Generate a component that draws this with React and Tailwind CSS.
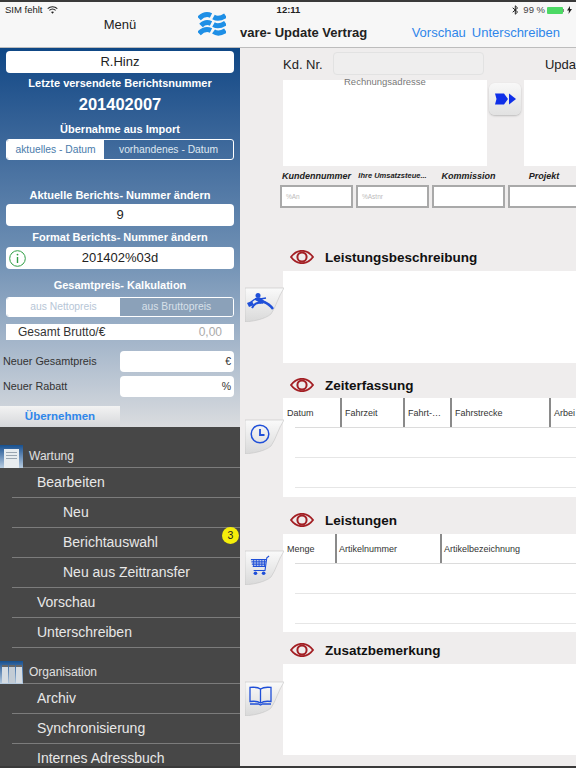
import React from "react";

const blue = "#1f4fd8";

const EyeIcon = () => (
  <svg width="24" height="14" viewBox="0 0 24 14" className="shrink-0">
    <path d="M1 7C5 1.5 9 .8 12 .8S19 1.5 23 7C19 12.5 15 13.2 12 13.2S5 12.5 1 7Z" fill="none" stroke="#a31f24" strokeWidth="1.8" />
    <circle cx="12" cy="7" r="4.6" fill="none" stroke="#a31f24" strokeWidth="2" />
  </svg>
);

const RunnerIcon = () => (
  <svg width="27" height="18" viewBox="0 0 27 18" fill="none" stroke={blue}>
    <circle cx="11" cy="2.5" r="2.5" fill={blue} stroke="none" />
    <path d="M8 5 13 4.5 19 9 15 11 8 7Z" fill={blue} stroke="none" />
    <path d="M13 6 19 5" strokeWidth="1.5" />
    <path d="M17 9C20 10 23 12 26 16" strokeWidth="2.4" />
    <path d="M14 10C10 9 7 11 5 15" strokeWidth="2" />
    <path d="M8 6 4 9" strokeWidth="1.5" />
    <path d="M0 10 5 8 7 12 2 14Z" fill={blue} stroke="none" />
  </svg>
);

const ClockIcon = () => (
  <svg width="20" height="20" viewBox="0 0 20 20" fill="none" stroke={blue} strokeWidth="1.5">
    <circle cx="10" cy="10" r="8.8" />
    <path d="M10 5V11H14.5" strokeWidth="1.8" />
  </svg>
);

const CartIcon = () => (
  <svg width="20" height="21" viewBox="0 0 22 23" fill="none" stroke={blue}>
    <path d="M21 1 18.5 3 16.5 17H4" strokeWidth="1.2" />
    <path d="M1 5H18M1.5 7.5H17.5M2 10H17M3 12.5H17" strokeWidth="1.2" />
    <path d="M4 5V13M7 5V13M10 5V13M13 5V13M16 5V13" strokeWidth="1" />
    <circle cx="6" cy="20" r="2" fill={blue} stroke="none" />
    <circle cx="15" cy="20" r="2" fill={blue} stroke="none" />
  </svg>
);

const BookIcon = () => (
  <svg width="23" height="20" viewBox="0 0 23 20" fill="none" stroke={blue} strokeWidth="1.3">
    <path d="M11.5 3C9 1.2 5 1 1 1.4V15.5C5 15 9 15.3 11.5 17C14 15.3 18 15 22 15.5V1.4C18 1 14 1.2 11.5 3Z" />
    <path d="M11.5 3V17M1 18H9.5L11.5 19 13.5 18H22" />
  </svg>
);

const Logo = () => (
  <svg width="28" height="27" viewBox="0 0 28 27" fill="none" stroke="#1e8fe6" strokeWidth="5">
    <path d="M1 7.5C5 3.5 9 2.5 13 4.5" />
    <path d="M15.5 6C19 8 23 7.5 27.5 4.5" />
    <path d="M3 14.5C6 11.5 9 10.5 13 12.5" />
    <path d="M15.5 13.5C19 15.5 23 15 27.5 12" />
    <path d="M1 22.5C5 18.5 9 17.5 13 19.5" />
    <path d="M15.5 20.5C19 23 23 22.5 27.5 19.5" />
  </svg>
);

const Tag = ({ top, children }) => (
  <div className="absolute left-[-38px] w-[39px] h-[35px]" style={{ top }}>
    <svg width="39" height="35" viewBox="0 0 39 35" className="absolute inset-0">
      <defs>
        <linearGradient id="tagFill" x1="0" y1="0" x2="0" y2="1">
          <stop offset="0" stopColor="#fafafa" />
          <stop offset="1" stopColor="#d9d9d9" />
        </linearGradient>
      </defs>
      <path d="M0 1H39C33 10 31 20 26 27 20 32 10 34 0 35Z" fill="url(#tagFill)" stroke="#c4c4c4" strokeWidth=".6" />
    </svg>
    <div className="absolute left-0 top-0 w-[30px] h-[30px] flex items-center justify-center">{children}</div>
  </div>
);

const Field = ({ children, className = "" }) => (
  <div className={`mx-[6px] h-[22px] bg-white rounded-[4px] flex items-center justify-center text-[13px] text-[#222] ${className}`}>
    {children}
  </div>
);

const Label = ({ children, className = "" }) => (
  <div className={`h-[16px] leading-[16px] text-center text-[11px] font-bold text-white ${className}`}>{children}</div>
);

const MenuRow = ({ children, sub, badge }) => (
  <div className="relative ml-[12px] h-[30px] border-b border-[#7c7c7c] flex items-center">
    <span className={`text-[14px] text-[#e8e8e8] ${sub ? "pl-[51px]" : "pl-[25px]"}`}>{children}</span>
    {badge && (
      <span className="absolute right-[1px] top-[-1px] w-[17px] h-[17px] rounded-full bg-[#f5ee0a] text-[#222] text-[10.5px] flex items-center justify-center">
        {badge}
      </span>
    )}
  </div>
);

const MenuHead = ({ kind, children }) => (
  <div className="h-[23px] border-b border-[#7c7c7c] flex items-center">
    <div className="w-[23px] h-[23px] bg-gradient-to-b from-[#15508f] to-[#b9cde0] flex items-end justify-center shrink-0">
      {kind === "doc" ? (
        <div className="w-[15px] h-[19px] bg-[#e8ecef] flex flex-col gap-[2px] px-[2px] pt-[3px]">
          <div className="h-[1px] bg-[#9aa5b0]" />
          <div className="h-[1px] bg-[#9aa5b0]" />
          <div className="h-[1px] bg-[#9aa5b0]" />
        </div>
      ) : (
        <div className="flex gap-[1px] pb-[1px]">
          <div className="w-[6px] h-[18px] bg-[#d5dce3] border-t-2 border-[#666]" />
          <div className="w-[6px] h-[18px] bg-[#c3ccd5] border-t-2 border-[#666]" />
          <div className="w-[6px] h-[18px] bg-[#d5dce3] border-t-2 border-[#666]" />
        </div>
      )}
    </div>
    <span className="ml-[6px] text-[12px] text-[#e0e0e0]">{children}</span>
  </div>
);

const Heading = ({ children, className = "" }) => (
  <div className={`flex items-center gap-[11px] pl-[7px] h-[16px] ${className}`}>
    <EyeIcon />
    <span className="pt-[2px] text-[13.5px] font-bold text-[#111]">{children}</span>
  </div>
);

const ColHead = ({ width, pad = "pl-[3px]", children }) => (
  <div className={`h-[30px] flex items-center pt-[1px] border-r-2 border-[#8a8a8a] text-[9px] text-[#333] shrink-0 ${pad}`} style={{ width }}>
    {children}
  </div>
);

const Lines = () => (
  <div className="absolute left-[12px] right-0 top-[29px]">
    <div className="h-[30px] border-t border-[#dcdcdc]" />
    <div className="h-[30px] border-t border-[#e6e6e6]" />
    <div className="border-t border-[#e6e6e6]" />
  </div>
);

const InputCol = ({ title, hint, small, last }) => (
  <div className={`flex flex-col items-center shrink-0 ${last ? "w-[80px]" : "w-[73px]"}`}>
    <div className={`h-[18px] pt-[1px] leading-[18px] font-bold italic text-[#222] whitespace-nowrap ${small ? "text-[7.5px]" : "text-[9px]"} ${last ? "pr-[8px]" : ""}`}>
      {title}
    </div>
    <div className="mt-[1px] w-full h-[23px] border-2 border-[#a9a9a9] bg-white text-[6.5px] text-[#bbb] pl-[4px] flex items-center">
      {hint}
    </div>
  </div>
);

export default function App() {
  return (
    <div className="w-[576px] h-[768px] overflow-hidden flex flex-col border-y-2 border-[#3a3a3a] bg-[#efeded]" style={{ fontFamily: '"Liberation Sans", Arial, sans-serif' }}>
      {/* top bars */}
      <header className="relative h-[46px] shrink-0 bg-[#f7f7f7] border-b border-[#bdbdbd] overflow-hidden">
        <div className="h-[16px] pl-[5px] pr-[4px] flex items-center justify-between text-[9.5px] text-[#222]">
          <div className="flex items-center gap-[4px] w-[120px]">
            SIM fehlt
            <svg width="11" height="8" viewBox="0 0 11 8" fill="none" stroke="#222" strokeWidth="1.1">
              <path d="M.7 2.7C3.5 0 7.5 0 10.3 2.7M2.4 4.4C4.2 2.8 6.8 2.8 8.6 4.4" />
              <path d="M5.5 7.8 4 6C5 5.3 6 5.3 7 6Z" fill="#222" stroke="none" />
            </svg>
          </div>
          <span className="font-bold text-[9.5px]">12:11</span>
          <div className="flex items-center justify-end w-[120px]">
            <svg width="7" height="10" viewBox="0 0 7 10" fill="none" stroke="#222" strokeWidth="1">
              <path d="M.7 2.8 5.6 7 3.3 9.2V.8L5.6 3 .7 7.2" />
            </svg>
            <span className="ml-[4px] text-[#444]">99 %</span>
            <div className="ml-[2px] w-[16px] h-[7px] bg-[#4cd964] rounded-[1px]" />
            <div className="w-[1px] h-[3px] bg-[#888]" />
            <svg width="5" height="8" viewBox="0 0 5 8" fill="#222" className="ml-[3px]">
              <path d="M3 0 0 4.5H2L1.5 8 5 3H3Z" />
            </svg>
          </div>
        </div>
        <div className="flex items-start h-[28px]">
          <div className="w-[240px] shrink-0 text-center text-[13px] text-[#222] leading-[14px]">Menü</div>
          <div className="flex-1 flex items-center justify-between h-[24px] mt-[3px] pr-[16px] whitespace-nowrap">
            <span className="text-[13px] font-bold text-[#222]">vare- Update Vertrag</span>
            <div className="flex gap-[6px] text-[13px] text-[#2f86ea]">
              <span>Vorschau</span>
              <span>Unterschreiben</span>
            </div>
          </div>
        </div>
        <div className="absolute left-[198px] top-[9px]"><Logo /></div>
      </header>

      <div className="flex flex-1 min-h-0">
        {/* left column */}
        <aside className="w-[240px] shrink-0 flex flex-col">
          <div className="h-[379px] shrink-0 bg-gradient-to-b from-[#0e4785] via-[#6f90b4] via-55% to-[#dadcdf] flex flex-col">
            <Field className="mt-[3px] shrink-0">R.Hinz</Field>
            <Label className="mt-[2px]">Letzte versendete Berichtsnummer</Label>
            <div className="mt-[3px] h-[20px] leading-[20px] text-center text-[16.5px] font-bold text-white">201402007</div>
            <Label className="mt-[7px]">Übernahme aus Import</Label>
            <div className="mt-[2px] mx-[6px] h-[21px] flex rounded-[3px] border border-white overflow-hidden text-[10.3px]">
              <div className="w-[97px] bg-white text-[#4a7bab] flex items-center justify-center">aktuelles - Datum</div>
              <div className="flex-1 text-[#dfe8f1] flex items-center justify-center">vorhandenes - Datum</div>
            </div>
            <Label className="mt-[27px]">Aktuelle Berichts- Nummer ändern</Label>
            <Field className="mt-[1px] shrink-0">9</Field>
            <Label className="mt-[3px]">Format Berichts- Nummer ändern</Label>
            <Field className="relative mt-[2px] shrink-0">
              <svg width="17" height="17" viewBox="0 0 17 17" className="absolute left-[3px] top-[3px]" fill="none" stroke="#2f9e44">
                <circle cx="8.5" cy="8.5" r="7.8" />
                <path d="M8.5 7V13" strokeWidth="1.4" />
                <circle cx="8.5" cy="4.6" r=".9" fill="#2f9e44" stroke="none" />
              </svg>
              201402%03d
            </Field>
            <Label className="mt-[8px]">Gesamtpreis- Kalkulation</Label>
            <div className="mt-[4px] mx-[6px] h-[21px] flex rounded-[3px] border border-white overflow-hidden text-[10.3px]">
              <div className="w-[113px] bg-white text-[#b7c6d6] flex items-center justify-center">aus Nettopreis</div>
              <div className="flex-1 bg-[#8ba1b9] text-[#d8e0e9] flex items-center justify-center">aus Bruttopreis</div>
            </div>
            <div className="mt-[7px] mx-[6px] h-[16px] shrink-0 bg-white flex items-center justify-between pl-[12px] pr-[12px] text-[12px] text-[#333]">
              <span>Gesamt Brutto/€</span>
              <span className="text-[#aaa]">0,00</span>
            </div>
            <div className="mt-[11px] flex items-center h-[21px] shrink-0">
              <span className="w-[120px] pl-[3px] text-[10.8px] text-[#333]">Neuer Gesamtpreis</span>
              <div className="w-[114px] h-full bg-white rounded-[4px] text-right pr-[3px] text-[10.5px] leading-[21px] text-[#333]">€</div>
            </div>
            <div className="mt-[4px] flex items-center h-[21px] shrink-0">
              <span className="w-[120px] pl-[3px] text-[10.8px] text-[#333]">Neuer Rabatt</span>
              <div className="w-[114px] h-full bg-white rounded-[4px] text-right pr-[3px] text-[10.5px] leading-[21px] text-[#333]">%</div>
            </div>
            <div className="mt-[9px] w-[120px] h-[21px] shrink-0 bg-gradient-to-b from-[#f3f3f3] to-[#d5d7da] text-center text-[11.5px] leading-[21px] font-bold text-[#2f86ea]">
              Übernehmen
            </div>
          </div>

          <nav className="flex-1 min-h-0 overflow-hidden bg-[#474747] pt-[18px]">
            <MenuHead kind="doc">Wartung</MenuHead>
            <MenuRow>Bearbeiten</MenuRow>
            <MenuRow sub>Neu</MenuRow>
            <MenuRow sub badge="3">Berichtauswahl</MenuRow>
            <MenuRow sub>Neu aus Zeittransfer</MenuRow>
            <MenuRow>Vorschau</MenuRow>
            <MenuRow>Unterschreiben</MenuRow>
            <div className="mt-[13px]">
              <MenuHead kind="org">Organisation</MenuHead>
            </div>
            <MenuRow>Archiv</MenuRow>
            <MenuRow>Synchronisierung</MenuRow>
            <MenuRow>Internes Adressbuch</MenuRow>
          </nav>
        </aside>

        {/* form */}
        <main className="flex-1 min-w-0 overflow-hidden pl-[43px] flex flex-col whitespace-nowrap">
          <div className="flex items-center h-[23px] mt-[4px] shrink-0">
            <span className="w-[50px] pt-[2px] text-[13px] text-[#222]">Kd. Nr.</span>
            <div className="w-[151px] h-full rounded-[4px] border border-[#e2e2e2] bg-[#efeeee]" />
            <span className="ml-[61px] pt-[2px] text-[13px] text-[#222]">Upda</span>
          </div>

          <div className="relative flex h-[86px] mt-[5px] shrink-0">
            <div className="w-[204px] bg-white text-[9.5px] text-[#777] pl-[61px] leading-[3px] shrink-0">Rechnungsadresse</div>
            <div className="w-[37px] shrink-0 pl-[2px] pt-[3px]">
              <div className="w-[32px] h-[32px] rounded-[6px] bg-gradient-to-b from-[#f8f8f8] to-[#e2e2e2] shadow-[0_1px_2px_#bbb] flex items-center justify-center">
                <svg width="21" height="12" viewBox="0 0 21 12" fill="#0f2fe8">
                  <path d="M0 .5H9L13 6 9 11.5H0L1.5 6Z" />
                  <path d="M14 .5 21 6 14 11.5Z" />
                </svg>
              </div>
            </div>
            <div className="flex-1 bg-white" />
          </div>

          <div className="flex gap-[3px] -ml-[3px] shrink-0">
            <InputCol title="Kundennummer" hint="%An" />
            <InputCol title="Ihre Umsatzsteue..." hint="%Astnr" small />
            <InputCol title="Kommission" />
            <InputCol title="Projekt" last />
          </div>

          <Heading className="mt-[41px] shrink-0">Leistungsbeschreibung</Heading>
          <div className="relative h-[92px] mt-[6px] bg-white shrink-0">
            <Tag top="16px"><RunnerIcon /></Tag>
          </div>

          <Heading className="mt-[14px] shrink-0">Zeiterfassung</Heading>
          <div className="relative h-[99px] mt-[5px] bg-white shrink-0">
            <div className="flex">
              <ColHead pad="pl-[4px]" width="59px">Datum</ColHead>
              <ColHead width="63px">Fahrzeit</ColHead>
              <ColHead width="47px">Fahrt-…</ColHead>
              <ColHead width="99px">Fahrstrecke</ColHead>
              <div className="h-[30px] flex items-center pt-[1px] pl-[3px] text-[9px] text-[#333]">Arbei</div>
            </div>
            <Lines />
            <Tag top="21px"><ClockIcon /></Tag>
          </div>

          <Heading className="mt-[15px] shrink-0">Leistungen</Heading>
          <div className="relative h-[98px] mt-[6px] bg-white shrink-0">
            <div className="flex">
              <ColHead pad="pl-[4px]" width="54px">Menge</ColHead>
              <ColHead pad="pl-[2px]" width="105px">Artikelnummer</ColHead>
              <div className="h-[30px] flex items-center pt-[1px] pl-[2px] text-[9px] text-[#333]">Artikelbezeichnung</div>
            </div>
            <Lines />
            <Tag top="16px"><CartIcon /></Tag>
          </div>

          <Heading className="mt-[10px] shrink-0">Zusatzbemerkung</Heading>
          <div className="relative h-[91px] mt-[6px] bg-white shrink-0">
            <Tag top="17px"><BookIcon /></Tag>
          </div>
        </main>
      </div>
    </div>
  );
}
